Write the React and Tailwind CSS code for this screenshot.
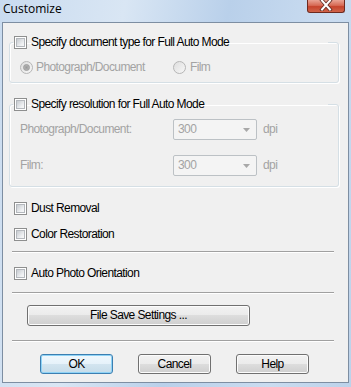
import React from "react"

const ui = "font-['Liberation_Sans',Arial,sans-serif] text-[12px] leading-[13px] tracking-[-0.6px]"

function Checkbox() {
  return (
    <span className="block w-[13px] h-[13px] shrink-0 border border-[#8e8f8f] bg-white p-[1px]">
      <span className="block w-full h-full border border-[#b4b8bd] bg-[linear-gradient(135deg,#c7cbd0,#eef0f2_70%,#f8f8f8)]" />
    </span>
  )
}

function Radio({ checked }) {
  return (
    <span className="flex items-center justify-center w-[13px] h-[13px] shrink-0 rounded-full border border-[#b6b6b6] bg-[linear-gradient(135deg,#dedede,#f7f7f7)]">
      {checked && (
        <span className="block w-[7px] h-[7px] rounded-full border border-[#9c9c9c] bg-[radial-gradient(circle,#9a9a9a,#bdbdbd)]" />
      )}
    </span>
  )
}

function CheckRow({ label, className = "" }) {
  return (
    <div className={"flex items-center gap-[4px] h-[13px] " + className}>
      <Checkbox />
      <span className="text-black whitespace-nowrap">{label}</span>
    </div>
  )
}

function Group({ label, children }) {
  return (
    <fieldset className="ml-[6px] w-[330px] min-w-0 rounded-[3px] border border-[#d5dfe5] shadow-[inset_1px_1px_0_#fff,1px_1px_0_#fff] p-0">
      <legend className="ml-[3px] w-[315px] pl-[1px] p-0">
        <CheckRow label={label} />
      </legend>
      {children}
    </fieldset>
  )
}

function DpiSelect() {
  return (
    <div className="flex items-center gap-[6px]">
      <div className="flex items-center justify-between w-[84px] h-[21px] rounded-[2px] border border-[#bcc1c5] bg-[#f4f4f4] pl-[4px] pr-[6px] text-[#a3a3a3]">
        <span>300</span>
        <svg width="7" height="4" viewBox="0 0 7 4">
          <path d="M0 0 H7 L3.5 4 Z" fill="#a8a8a8" />
        </svg>
      </div>
      <span className="text-[#a3a3a3]">dpi</span>
    </div>
  )
}

function Separator({ className = "" }) {
  return <div className={"ml-[9px] w-[322px] h-[2px] border-t border-[#a0a0a0] border-b border-b-white " + className} />
}

function Button({ children, primary, className = "" }) {
  return (
    <button
      className={
        "flex items-center justify-center rounded-[3px] border text-black " +
        (primary
          ? "border-[#3c7fb1] shadow-[inset_0_0_0_1px_#8fd3f6] bg-[linear-gradient(#f0f8fd,#e6f2fa_50%,#d3e5f0_50%,#c6dce9)] "
          : "border-[#707070] shadow-[inset_0_0_0_1px_#fcfcfc] bg-[linear-gradient(#f2f2f2,#ebebeb_50%,#dddddd_50%,#cfcfcf)] ") +
        className
      }
    >
      {children}
    </button>
  )
}

export default function App() {
  return (
    <div className="w-[351px] h-[387px] bg-[linear-gradient(100deg,#c9dbef,#d9e6f4_30%,#b9d0ea_55%,#cadcf0_80%,#bcd2ea)] overflow-hidden">
      <div className="flex justify-between h-[22px]">
        <span className="pl-[3px] pt-[3px] font-['Open_Sans',sans-serif] text-[12px] leading-[12px] text-black">Customize</span>
        <div className="mr-[6px] w-[38px] h-[13px] rounded-b-[3px] border-x border-b border-[#6e2a1f] bg-[linear-gradient(#e9a394,#d76a55_45%,#c6432c_55%,#d0644a)] flex justify-center">
          <svg width="14" height="11" viewBox="0 0 14 11">
            <path d="M3 0.5 L11 9.5 M11 0.5 L3 9.5" stroke="#5a2a22" strokeWidth="3.6" strokeLinecap="square" />
            <path d="M3 0.5 L11 9.5 M11 0.5 L3 9.5" stroke="#ffffff" strokeWidth="2" strokeLinecap="square" />
          </svg>
        </div>
      </div>

      <div className={"ml-[2px] w-[347px] h-[361px] border border-[#7d8ea2] bg-[#f0f0f0] " + ui}>
        <div className="h-[13px]" />
        <Group label="Specify document type for Full Auto Mode">
          <div className="flex items-center pl-[10px] pt-[12px] pb-[8px]">
            <div className="flex items-center gap-[3px] w-[153px]">
              <Radio checked />
              <span className="text-[#a3a3a3]">Photograph/Document</span>
            </div>
            <div className="flex items-center gap-[4px]">
              <Radio />
              <span className="text-[#a3a3a3]">Film</span>
            </div>
          </div>
        </Group>

        <div className="mt-[15px]">
          <Group label="Specify resolution for Full Auto Mode">
            <div className="flex flex-col gap-[15px] pl-[10px] pt-[8px] pb-[10px]">
              <div className="flex items-center">
                <span className="w-[153px] text-[#a3a3a3]">Photograph/Document:</span>
                <DpiSelect />
              </div>
              <div className="flex items-center">
                <span className="w-[153px] text-[#a3a3a3]">Film:</span>
                <DpiSelect />
              </div>
            </div>
          </Group>
        </div>

        <CheckRow label="Dust Removal" className="ml-[11px] mt-[15px]" />
        <CheckRow label="Color Restoration" className="ml-[11px] mt-[13px]" />
        <Separator className="mt-[10px]" />
        <CheckRow label="Auto Photo Orientation" className="ml-[11px] mt-[14px]" />
        <Separator className="mt-[12px]" />

        <Button className="ml-[24px] mt-[11px] w-[223px] h-[21px]">File Save Settings ...</Button>

        <Separator className="mt-[14px]" />

        <div className="flex gap-[25px] ml-[37px] mt-[12px]">
          <Button primary className="w-[73px] h-[20px]">OK</Button>
          <Button className="w-[73px] h-[20px]">Cancel</Button>
          <Button className="w-[73px] h-[20px]">Help</Button>
        </div>
      </div>
    </div>
  )
}
